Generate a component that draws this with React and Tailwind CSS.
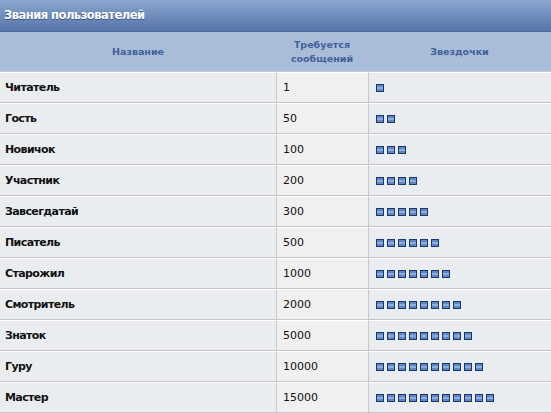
import React from "react";

const ranks = [
  ["Читатель", "1"],
  ["Гость", "50"],
  ["Новичок", "100"],
  ["Участник", "200"],
  ["Завсегдатай", "300"],
  ["Писатель", "500"],
  ["Старожил", "1000"],
  ["Смотритель", "2000"],
  ["Знаток", "5000"],
  ["Гуру", "10000"],
  ["Мастер", "15000"],
];

function Star() {
  return (
    <svg width="8" height="8" viewBox="0 0 8 8" className="block">
      <rect x="0.5" y="0.5" width="7" height="7" fill="#5f86c6" stroke="#1c3668" />
      <rect x="1" y="3" width="6" height="2" fill="#8eaee0" />
    </svg>
  );
}

export default function App() {
  return (
    <div
      className="w-[551px] h-[413px] overflow-hidden bg-[#eaedf0]"
      style={{ fontFamily: '"DejaVu Sans", Verdana, sans-serif' }}
    >
      <div className="h-[32px] flex items-center pt-[1px] px-[4px] bg-gradient-to-b from-[#8ba6cf] to-[#5674a8] border-b border-[#4d6a9c]">
        <span className="text-white font-bold text-[11.5px] tracking-[-0.5px] [text-shadow:0_1px_0_#3d5684]">
          Звания пользователей
        </span>
      </div>
      <div className="grid grid-cols-[276px_92px_1fr] h-[40px] bg-[#a9bcd8] text-[#41619a] font-bold text-[9.5px] leading-[14px] border-b border-[#c5cad2]">
        <div className="flex items-center justify-center">Название</div>
        <div className="flex items-center justify-center text-center">
          Требуется
          <br />
          сообщений
        </div>
        <div className="flex items-center justify-center">Звездочки</div>
      </div>
      {ranks.map(([name, num], i) => (
        <div
          key={name}
          className="grid grid-cols-[276px_92px_1fr] h-[31px] border-b border-[#c3c6c9] text-[11px] text-[#111]"
        >
          <div className="flex items-center pt-[1px] pl-[5px] font-bold tracking-[-0.6px] border-t border-white">
            {name}
          </div>
          <div className="flex items-center pt-[1px] pl-[6px] bg-[#f0f0f0] border-l border-[#c8c8c8] border-t border-t-white">
            {num}
          </div>
          <div className="flex items-center gap-[3px] pl-[7px] border-l border-[#c8c8c8] border-t border-t-white">
            {Array.from({ length: i + 1 }).map((_, k) => (
              <Star key={k} />
            ))}
          </div>
        </div>
      ))}
    </div>
  );
}
